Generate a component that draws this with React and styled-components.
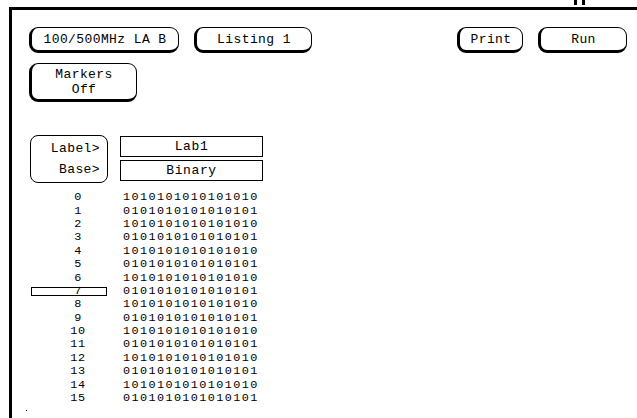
import React from "react";
import styled, { createGlobalStyle } from "styled-components";

const GlobalStyle = createGlobalStyle`
  html, body {
    margin: 0;
    padding: 0;
    background: #fff;
  }
  body {
    font-family: "Liberation Mono", "DejaVu Sans Mono", monospace;
    color: #000;
  }
`;

const Page = styled.div`
  width: 637px;
  height: 418px;
  overflow: hidden;
  display: flex;
  flex-direction: column;
`;

// bits of the screen above that peek in at the top
const TopStrip = styled.div`
  height: 7px;
  display: flex;
  justify-content: flex-end;
  align-items: flex-start;
  gap: 5px;
  padding-right: 52px;
`;

const StripMark = styled.span`
  width: 3px;
  height: 5px;
  background: #000;
`;

const Screen = styled.div`
  flex: 1;
  margin-left: 9px;
  border-top: 3px solid #000;
  border-left: 3px solid #000;
  padding: 17px 10px 0 17px;
  display: flex;
  flex-direction: column;
`;

const Toolbar = styled.div`
  display: flex;
  align-items: flex-start;
`;

const Spacer = styled.div`
  flex: 1;
`;

const Key = styled.div`
  box-sizing: border-box;
  width: ${({ $w }) => $w}px;
  height: ${({ $h }) => $h || 26}px;
  margin-left: ${({ $ml }) => $ml || 0}px;
  border: 1px solid #000;
  border-left-width: 3px;
  border-bottom-width: 3px;
  border-radius: 9px;
  background: #fff;
  display: flex;
  flex-direction: column;
  align-items: center;
  justify-content: center;
  font-size: 13px;
  line-height: 15px;
  letter-spacing: 0.4px;
  white-space: pre;
`;

const KeyRow = styled.div`
  display: flex;
  margin-top: 10px;
`;

const LabelArea = styled.div`
  display: flex;
  gap: 12px;
  margin-top: 33px;
  margin-left: 1px;
`;

const LabelBox = styled.div`
  box-sizing: border-box;
  width: 78px;
  height: 48px;
  border: 1px solid #000;
  border-radius: 8px;
  display: flex;
  flex-direction: column;
  justify-content: space-around;
  align-items: flex-end;
  padding: 2px 7px 2px 0;
  font-size: 13px;
  line-height: 15px;
  letter-spacing: 0.4px;
`;

const Fields = styled.div`
  display: flex;
  flex-direction: column;
  gap: 3px;
  padding-top: 1px;
`;

const Field = styled.div`
  box-sizing: border-box;
  width: 143px;
  height: 21px;
  border: 1px solid #000;
  display: flex;
  align-items: center;
  justify-content: center;
  font-size: 13px;
  line-height: 15px;
  letter-spacing: 0.6px;
`;

const Listing = styled.div`
  display: flex;
  flex-direction: column;
  margin-top: 8px;
  margin-left: 2px;
`;

const Row = styled.div`
  display: flex;
  align-items: center;
  gap: 16px;
  height: 13.4px;
  font-size: 11.8px;
  line-height: 13px;
  letter-spacing: 1.4px;
`;

const IndexCell = styled.div`
  position: relative;
  box-sizing: border-box;
  width: 76px;
  height: 13px;
  padding-left: 18px;
  text-align: center;
  letter-spacing: 0.6px;

  /* cursor frame drawn over the selected state number */
  &::after {
    content: "";
    display: ${({ $selected }) => ($selected ? "block" : "none")};
    position: absolute;
    left: 0;
    right: 0;
    top: 2px;
    height: 9px;
    border: 1px solid #000;
    box-sizing: border-box;
  }
`;

const DataCell = styled.div``;

const Dot = styled.span`
  width: 1px;
  height: 1px;
  background: #000;
  margin: 5px 0 0 -3px;
`;

const rows = Array.from({ length: 16 }, (_, i) =>
  i % 2 === 0 ? "1010101010101010" : "0101010101010101"
);

export default function App() {
  return (
    <Page>
      <GlobalStyle />
      <TopStrip>
        <StripMark />
        <StripMark />
      </TopStrip>
      <Screen>
        <Toolbar>
          <Key $w={150}>100/500MHz LA B</Key>
          <Key $w={118} $ml={15}>Listing 1</Key>
          <Spacer />
          <Key $w={66}>Print</Key>
          <Key $w={89} $ml={15}>Run</Key>
        </Toolbar>
        <KeyRow>
          <Key $w={108} $h={39}>
            <span>Markers</span>
            <span>Off</span>
          </Key>
        </KeyRow>
        <LabelArea>
          <LabelBox>
            <span>Label&gt;</span>
            <span>Base&gt;</span>
          </LabelBox>
          <Fields>
            <Field>Lab1</Field>
            <Field>Binary</Field>
          </Fields>
        </LabelArea>
        <Listing>
          {rows.map((bits, i) => (
            <Row key={i}>
              <IndexCell $selected={i === 7}>{i}</IndexCell>
              <DataCell>{bits}</DataCell>
            </Row>
          ))}
        </Listing>
        <Dot />
      </Screen>
    </Page>
  );
}
